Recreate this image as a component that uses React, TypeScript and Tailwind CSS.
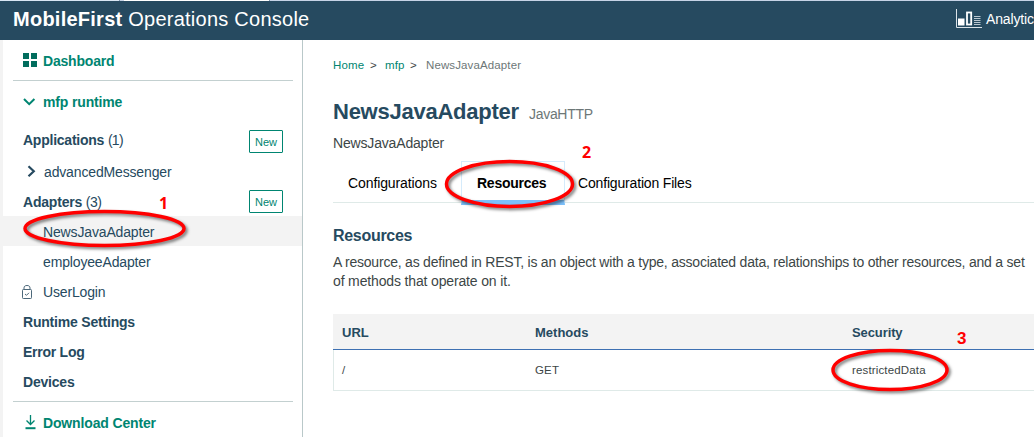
import React from "react";

function Chevron({ down = false }: { down?: boolean }) {
  return down ? (
    <svg className="h-3 w-[20px] shrink-0" viewBox="0 0 20 12" fill="none" stroke="#008571" strokeWidth="2">
      <path d="M1 3 L6.2 8.2 L11.4 3" />
    </svg>
  ) : (
    <svg className="h-3.5 w-[21px] shrink-0" viewBox="0 0 21 14" fill="none" stroke="#264a60" strokeWidth="2.2">
      <path d="M5.5 1.2 L10.8 6.2 L5.5 11.2" />
    </svg>
  );
}

function NewButton() {
  return (
    <button className="flex h-[23px] w-[34px] items-center justify-center rounded-[1px] border border-[#008571] pt-px text-[11px] font-normal tracking-normal text-[#008571]">
      New
    </button>
  );
}

function Header() {
  return (
    <header className="flex h-10 shrink-0 flex-col bg-[#264a60] text-white">
      <div className="flex h-px shrink-0">
        <div className="w-[119px] bg-[#d8e6f3]" />
        <div className="w-px bg-[#7f93ad]" />
        <div className="w-[4px] bg-[#c6d3e6]" />
        <div className="w-[145px] bg-white" />
        <div className="w-px bg-[#7f93ad]" />
        <div className="flex-1 bg-[#c6d3e6]" />
      </div>
      <div className="flex h-[36px] items-center justify-between pl-[13px]">
        <h1 className="text-[20px] leading-6 tracking-[0.25px] whitespace-nowrap">
          <b>MobileFirst</b> Operations Console
        </h1>
        <div className="flex w-[78px] items-center overflow-hidden whitespace-nowrap">
          <svg className="-mt-px h-5 w-[27px] shrink-0" viewBox="0 0 27 20" fill="none">
            <path d="M0.5 0 V18.5 H26" stroke="#dbe3e8" />
            <rect x="2" y="9.5" width="6.5" height="7" fill="#fff" />
            <rect x="11" y="3.5" width="4.2" height="12" stroke="#fff" strokeWidth="1.8" />
            <path d="M18 7.5 H24.5 M18 9.5 H24.5 M18 11.5 H24.5 M18 13.5 H24.5 M18 15.5 H24.5" stroke="#b9c6cf" />
          </svg>
          <span className="pt-px pl-[3px] text-[14px] tracking-[-0.15px]">Analytics</span>
        </div>
      </div>
    </header>
  );
}

function Sidebar() {
  return (
    <nav className="flex w-[303px] shrink-0 flex-col border-r border-l-[3px] border-r-[#b9c8c9] border-l-[#f3f3f3] text-[14px] leading-[30px] tracking-[-0.15px] text-[#264a60]">
      <div className="mr-[9px] ml-[10px] flex h-[41px] items-center border-b border-[#c3d0d0] pt-px pl-[10px] font-bold tracking-[-0.2px] text-[#008571]">
        <svg className="mr-[6px] mb-[2px] h-[14px] w-[14px]" viewBox="0 0 14 14" fill="#006d5d">
          <path d="M0 0h6v6H0zM8 0h6v6H8zM0 8h6v6H0zM8 8h6v6H8z" />
        </svg>
        Dashboard
      </div>
      <div className="flex h-[44px] items-center pb-[2px] pl-[20px] font-bold text-[#008571]">
        <Chevron down />
        mfp runtime
      </div>
      <div className="flex h-[32px] items-center justify-between pr-[19px] pl-[20px]">
        <span className="pb-[2px]">
          <b className="tracking-[-0.24px]">Applications</b> <span className="tracking-[-0.7px]">(1)</span>
        </span>
        <NewButton />
      </div>
      <div className="flex h-[29px] items-center pl-[20px]">
        <Chevron />
        advancedMessenger
      </div>
      <div className="flex h-[30px] items-center justify-between pr-[19px] pl-[20px]">
        <span className="pt-[2px]">
          <b className="tracking-[-0.2px]">Adapters</b> <span className="tracking-[-0.5px]">(3)</span>
        </span>
        <NewButton />
      </div>
      <div className="h-[30px] bg-[#f3f3f3] pt-px pl-[40px]">NewsJavaAdapter</div>
      <div className="h-[30px] pt-px pl-[40px]">employeeAdapter</div>
      <div className="flex h-[30px] items-center pt-[2px] pl-[19px]">
        <svg className="mr-[11px] h-[14px] w-[10px]" viewBox="0 0 10 14" fill="none" stroke="#4c687a">
          <rect x="0.5" y="4.5" width="9" height="9" rx="0.8" />
          <path d="M2 4.5 V3 C2 1.2 3.2 0.5 5 0.5 C6.8 0.5 8 1.2 8 3 V4.5 M3 9 L4.5 10.3 L7 7.8" />
        </svg>
        UserLogin
      </div>
      <div className="h-[30px] pt-px pl-[20px] font-bold tracking-[-0.2px]">Runtime Settings</div>
      <div className="h-[30px] pt-px pl-[20px] font-bold tracking-[-0.25px]">Error Log</div>
      <div className="h-[30px] pt-px pl-[20px] font-bold tracking-[-0.2px]">Devices</div>
      <div className="mt-[5px] mr-[9px] ml-[10px] flex h-[41px] items-center border-t border-[#c3d0d0] pt-[2px] pl-[12px] font-bold text-[#008571]">
        <svg className="mr-[7px] mb-[2px] h-[15px] w-[11px]" viewBox="0 0 11 15" fill="none" stroke="#008571">
          <path d="M5.5 0 V9.5 M1.5 5.5 L5.5 9.5 L9.5 5.5" strokeWidth="1.3" />
          <path d="M0.5 13.2 H10.5" strokeWidth="2" />
        </svg>
        Download Center
      </div>
    </nav>
  );
}

function Main() {
  return (
    <main className="flex min-w-0 flex-1 flex-col pl-[30px] text-[#3c4646]">
      <div className="mt-[17px] flex h-[16px] text-[11.5px] leading-4 tracking-[0.12px]">
        <span className="w-[37px] text-[#008571]">Home</span>
        <span className="w-[15px]">&gt;</span>
        <span className="w-[25px] text-[#008571]">mfp</span>
        <span className="w-[16px]">&gt;</span>
        <span className="text-[#6d7777]">NewsJavaAdapter</span>
      </div>
      <div className="mt-[24px] flex h-[30px] items-baseline text-[22px] leading-[30px]">
        <h2 className="w-[196px] font-bold tracking-[-0.25px] text-[#264a60]">NewsJavaAdapter</h2>
        <span className="text-[14px] tracking-[-0.3px] text-[#6d7777]">JavaHTTP</span>
      </div>
      <p className="mt-[6px] h-5 text-[14px] leading-5 tracking-[-0.17px]">NewsJavaAdapter</p>
      <div className="mt-[8px] flex h-[42px] border-b border-[#dfeae8] text-[14px] leading-[44px] whitespace-nowrap text-black">
        <div className="w-[128px] pl-[15px] tracking-[-0.1px]">Configurations</div>
        <div className="h-[44px] w-[104px] border-x border-t border-b-[5px] border-x-[#d5ebfb] border-t-[#d5ebfb] border-b-[#7cc0fb] pl-[15px] leading-[42px] font-bold tracking-[-0.25px]">
          Resources
        </div>
        <div className="pl-[13px] tracking-[-0.17px]">Configuration Files</div>
      </div>
      <h3 className="mt-[21px] h-6 text-[16px] leading-6 font-bold tracking-[-0.3px] text-[#264a60]">Resources</h3>
      <p className="mt-[5px] h-[38px] text-[14px] leading-[19px] tracking-[-0.22px] whitespace-nowrap">
        A resource, as defined in REST, is an object with a type, associated data, relationships to other resources, and a set
        <br />
        <span className="tracking-[-0.15px]">of methods that operate on it.</span>
      </p>
      <div className="mt-[23px] flex h-[36px] shrink-0 items-center border-b border-b-[#3d70b2] bg-[#f3f3f3] pt-[2px] pl-[9px] text-[13px] font-bold text-[#264a60]">
        <span className="w-[193px]">URL</span>
        <span className="w-[317px]">Methods</span>
        <span className="tracking-[-0.1px]">Security</span>
      </div>
      <div className="flex h-[41px] shrink-0 items-center border-b border-l border-[#dfeae8] pt-[2px] pl-[8px] text-[11.5px] tracking-[0.15px]">
        <span className="w-[193px]">/</span>
        <span className="w-[317px]">GET</span>
        <span>restrictedData</span>
      </div>
    </main>
  );
}

function Annotations() {
  return (
    <div className="pointer-events-none absolute inset-0 text-[16px] leading-5 font-bold text-[#ff0000]">
      <svg className="absolute inset-0 h-full w-full drop-shadow-[2px_2px_1.5px_rgba(0,0,0,0.5)]" viewBox="0 0 1034 437" fill="none" stroke="#ff0000" strokeWidth="3.5">
        <ellipse cx="104.5" cy="228.5" rx="79.5" ry="17" />
        <ellipse cx="509.5" cy="184" rx="63" ry="22.5" />
        <ellipse cx="890" cy="370" rx="57" ry="19.5" />
      </svg>
      <span className="absolute top-[193px] left-[159px] font-['Noto_Sans',sans-serif]">1</span>
      <span className="absolute top-[142px] left-[582px] font-['Noto_Sans',sans-serif]">2</span>
      <span className="absolute top-[329px] left-[957px] text-[17px]">3</span>
    </div>
  );
}

export default function App() {
  return (
    <div className="relative flex h-[437px] w-[1034px] flex-col overflow-hidden bg-white font-['Liberation_Sans',Arial,sans-serif]">
      <Header />
      <div className="flex flex-1">
        <Sidebar />
        <Main />
      </div>
      <Annotations />
    </div>
  );
}
